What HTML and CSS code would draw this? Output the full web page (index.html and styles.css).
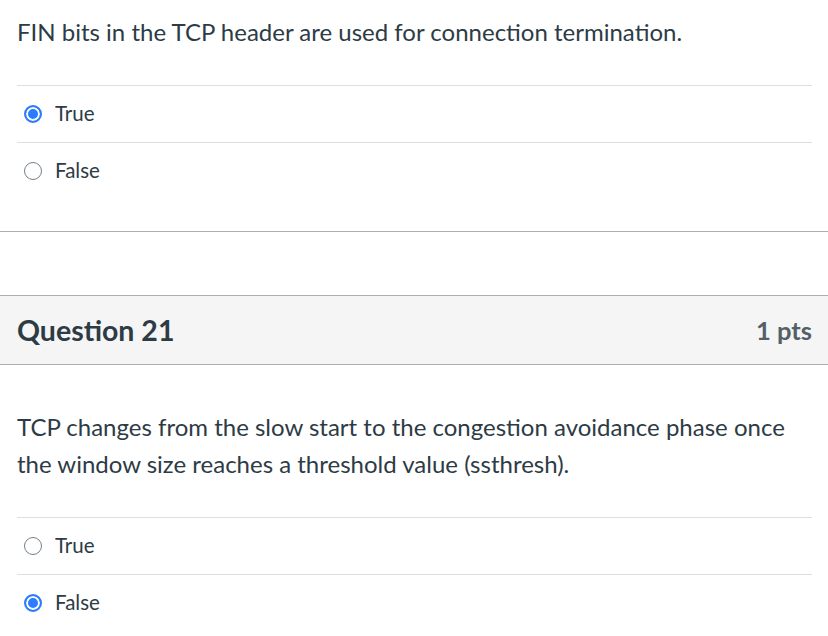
FILE: index.html
```html
<!DOCTYPE html>
<html lang="en">
<head>
<meta charset="utf-8">
<title>Quiz</title>
<link rel="stylesheet" href="styles.css">
</head>
<body>
  <section class="question first">
    <div class="q-body">
      <p class="q-text">FIN bits in the TCP header are used for connection termination.</p>
      <ul class="answers">
        <li class="answer"><span class="radio checked"></span><span class="label">True</span></li>
        <li class="answer"><span class="radio"></span><span class="label">False</span></li>
      </ul>
    </div>
  </section>

  <section class="question second">
    <header class="q-header">
      <h2 class="q-title">Question 21</h2>
      <span class="q-pts">1 pts</span>
    </header>
    <div class="q-body">
      <p class="q-text">TCP changes from the slow start to the congestion avoidance phase once the window size reaches a threshold value (ssthresh).</p>
      <ul class="answers">
        <li class="answer"><span class="radio"></span><span class="label">True</span></li>
        <li class="answer"><span class="radio checked"></span><span class="label">False</span></li>
      </ul>
    </div>
  </section>
</body>
</html>
```

FILE: styles.css
```css
html, body {
  margin: 0;
  padding: 0;
  background: #ffffff;
}

body {
  font-family: Lato, "Open Sans", sans-serif;
  color: #2d3b45;
  width: 828px;
  overflow: hidden;
}

.question.first {
  border-bottom: 1px solid #a5afb5;
  padding-bottom: 32px;
}

.question.second {
  margin-top: 63px;
}

.q-body {
  padding: 0 16px 0 17px;
}

.q-text {
  margin: 0;
  font-size: 24px;
  line-height: 37px;
}

.first .q-text {
  padding-top: 13px;
}

.second .q-text {
  padding-top: 43px;
}

.answers {
  list-style: none;
  margin: 35px 0 0 0;
  padding: 0;
}

.answer {
  display: flex;
  align-items: center;
  height: 56px;
  border-top: 1px solid #dcdfe1;
  font-size: 20.5px;
}

.radio {
  width: 18px;
  height: 18px;
  box-sizing: border-box;
  border-radius: 50%;
  border: 1.5px solid #73818b;
  margin-left: 7px;
  margin-right: 13px;
  background: #fff;
  flex: none;
}

.radio.checked {
  border: 2px solid #2b7cff;
  box-shadow: inset 0 0 0 2px #fff;
  background: #2b7cff;
}

.label {
  line-height: 24px;
  padding-bottom: 2px;
}

.q-header {
  display: flex;
  justify-content: space-between;
  align-items: center;
  height: 68px;
  background: #f5f5f5;
  border-top: 1px solid #a5afb5;
  border-bottom: 1px solid #a5afb5;
  padding: 0 16px 0 17px;
}

.q-title {
  margin: 0;
  font-size: 28.5px;
  font-weight: 700;
  line-height: 34px;
}

.q-pts {
  font-size: 25.5px;
  font-weight: 700;
  color: #555f66;
}
```
